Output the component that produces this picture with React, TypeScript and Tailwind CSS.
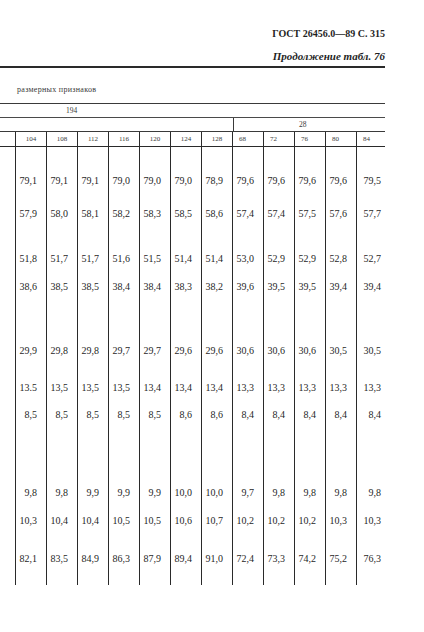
import React from "react";

const cols = ["104", "108", "112", "116", "120", "124", "128", "68", "72", "76", "80", "84"];

const rows: string[][] = [
  ["79,1", "79,1", "79,1", "79,0", "79,0", "79,0", "78,9", "79,6", "79,6", "79,6", "79,6", "79,5"],
  ["57,9", "58,0", "58,1", "58,2", "58,3", "58,5", "58,6", "57,4", "57,4", "57,5", "57,6", "57,7"],
  ["51,8", "51,7", "51,7", "51,6", "51,5", "51,4", "51,4", "53,0", "52,9", "52,9", "52,8", "52,7"],
  ["38,6", "38,5", "38,5", "38,4", "38,4", "38,3", "38,2", "39,6", "39,5", "39,5", "39,4", "39,4"],
  ["29,9", "29,8", "29,8", "29,7", "29,7", "29,6", "29,6", "30,6", "30,6", "30,6", "30,5", "30,5"],
  ["13.5", "13,5", "13,5", "13,5", "13,4", "13,4", "13,4", "13,3", "13,3", "13,3", "13,3", "13,3"],
  ["8,5", "8,5", "8,5", "8,5", "8,5", "8,6", "8,6", "8,4", "8,4", "8,4", "8,4", "8,4"],
  ["9,8", "9,8", "9,9", "9,9", "9,9", "10,0", "10,0", "9,7", "9,8", "9,8", "9,8", "9,8"],
  ["10,3", "10,4", "10,4", "10,5", "10,5", "10,6", "10,7", "10,2", "10,2", "10,2", "10,3", "10,3"],
  ["82,1", "83,5", "84,9", "86,3", "87,9", "89,4", "91,0", "72,4", "73,3", "74,2", "75,2", "76,3"],
];

// vertical gap before each data row (rows are 12px tall)
const rowGaps = [
  "mt-[28px]",
  "mt-[21px]",
  "mt-[33px]",
  "mt-[16px]",
  "mt-[52px]",
  "mt-[25px]",
  "mt-[15px]",
  "mt-[66px]",
  "mt-[16px]",
  "mt-[26px]",
];

export default function App() {
  return (
    <div
      className="w-[424px] h-[632px] bg-white text-[#1f1f1f] overflow-hidden"
      style={{ fontFamily: '"Liberation Serif", "DejaVu Serif", serif' }}
    >
      <div className="w-[385px] pt-[27px]">
        <div className="text-right text-[10px] font-bold leading-[14px]">
          ГОСТ 26456.0—89 С. 315
        </div>
        <div className="mt-[8px] text-right text-[11px] font-bold italic leading-[14px]">
          Продолжение табл. 76
        </div>
        <div className="mt-[3px] border-t-2 border-[#2a2a2a]" />

        <div className="mt-[17px] pl-[17px] text-[8px] leading-[10px] tracking-[0.3px] text-[#3a3a3a]">
          размерных признаков
        </div>

        <div className="mt-[8px] border-t border-[#3a3a3a]" />
        <div className="h-[13px] flex items-center pl-[66px] text-[7.5px] text-[#3a3a3a]">194</div>
        <div className="border-t border-[#4a4a4a]" />
        <div className="h-[13px] flex">
          <div className="w-[233px]" />
          <div className="flex-1 border-l border-[#3a3a3a] flex items-center pl-[65px] text-[7.5px] text-[#3a3a3a]">
            28
          </div>
        </div>
        <div className="border-t border-[#3a3a3a]" />

        <div className="h-[14px] flex pl-[15px]">
          {cols.map((c, i) => (
            <div
              key={c}
              className={`${i === 11 ? "w-[28px]" : "w-[31px]"} border-l border-[#2a2a2a] flex items-center ${
                i >= 7 ? "pl-[6px]" : "justify-center"
              } text-[7px] text-[#3a3a3a]`}
            >
              {c}
            </div>
          ))}
        </div>
        <div className="border-t border-[#2a2a2a]" />

        <div className="h-[438px] flex pl-[15px]">
          {cols.map((c, ci) => (
            <div
              key={c}
              className={`${ci === 11 ? "w-[28px]" : "w-[31px]"} border-l border-[#2a2a2a] flex flex-col items-end ${
                ci === 11 ? "pr-[3px]" : "pr-[9px]"
              }`}
            >
              {rows.map((r, ri) => (
                <div key={ri} className={`${rowGaps[ri]} h-[12px] leading-[12px] text-[10px]`}>
                  {r[ci]}
                </div>
              ))}
            </div>
          ))}
        </div>
      </div>
    </div>
  );
}
